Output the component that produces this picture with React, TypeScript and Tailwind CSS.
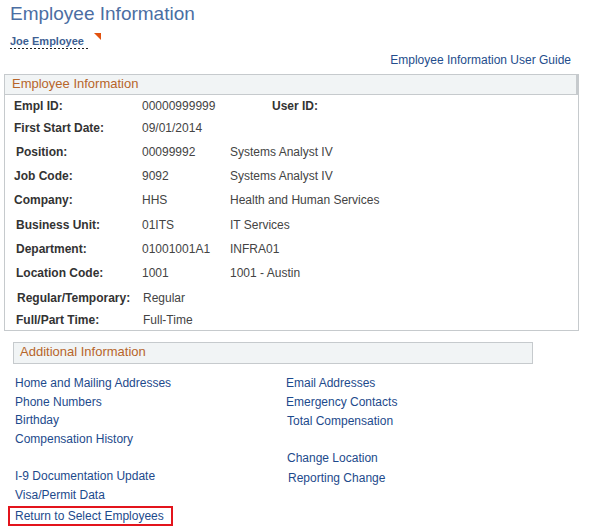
import React from 'react';

interface InfoRow {
  label: string;
  value?: string;
  desc?: string;
  h: string;
  pl: string;
}

const rows: InfoRow[] = [
  { label: 'Empl ID:', value: '00000999999', h: 'h-[21px]', pl: 'pl-[9px]' },
  { label: 'First Start Date:', value: '09/01/2014', h: 'h-[23px]', pl: 'pl-[9px]' },
  { label: 'Position:', value: '00099992', desc: 'Systems Analyst IV', h: 'h-[25px]', pl: 'pl-[11px]' },
  { label: 'Job Code:', value: '9092', desc: 'Systems Analyst IV', h: 'h-[24px]', pl: 'pl-[9px]' },
  { label: 'Company:', value: 'HHS', desc: 'Health and Human Services', h: 'h-[24px]', pl: 'pl-[9px]' },
  { label: 'Business Unit:', value: '01ITS', desc: 'IT Services', h: 'h-[25px]', pl: 'pl-[11px]' },
  { label: 'Department:', value: '01001001A1', desc: 'INFRA01', h: 'h-[24px]', pl: 'pl-[11px]' },
  { label: 'Location Code:', value: '1001', desc: '1001 - Austin', h: 'h-[24px]', pl: 'pl-[11px]' },
  { label: 'Regular/Temporary:', value: 'Regular', h: 'h-[25px]', pl: 'pl-[12px]' },
  { label: 'Full/Part Time:', value: 'Full-Time', h: 'h-[20px]', pl: 'pl-[11px]' },
];

const leftLinks = [
  { text: 'Home and Mailing Addresses', h: 'h-[19px]' },
  { text: 'Phone Numbers', h: 'h-[19px]' },
  { text: 'Birthday', h: 'h-[18px]' },
  { text: 'Compensation History', h: 'h-[20px]' },
  { text: '', h: 'h-[17px]' },
  { text: 'I-9 Documentation Update', h: 'h-[19px]' },
  { text: 'Visa/Permit Data', h: 'h-[20px]' },
];

const rightLinks = [
  { text: 'Email Addresses', h: 'h-[19px]', pl: 'pl-0' },
  { text: 'Emergency Contacts', h: 'h-[19px]', pl: 'pl-0' },
  { text: 'Total Compensation', h: 'h-[19px]', pl: 'pl-[1px]' },
  { text: '', h: 'h-[18px]', pl: 'pl-0' },
  { text: 'Change Location', h: 'h-[19px]', pl: 'pl-[1px]' },
  { text: 'Reporting Change', h: 'h-[21px]', pl: 'pl-[2px]' },
];

export default function App() {
  return (
    <div className="min-h-[527px] bg-white font-['Liberation_Sans',Arial,sans-serif] pl-[4px]">
      <div className="w-[575px]">
        {/* Page title */}
        <h1 className="pl-[6px] pt-[2px] text-[19px] leading-[23px] text-[#4b6ea3]">
          Employee Information
        </h1>

        {/* Employee name with related actions marker */}
        <div className="mt-[10px] flex items-start pl-[6px]">
          <div className="flex flex-col">
            <span className="pr-[5px] text-[11px] font-bold leading-[13px] text-[#3e5f93]">
              Joe Employee
            </span>
            <div className="h-px w-full bg-[linear-gradient(to_right,#222_50%,transparent_50%)] bg-[length:4px_1px] bg-repeat-x" />
          </div>
          <svg className="-mt-[2px] ml-[5px]" width="7" height="7" viewBox="0 0 7 7">
            <polygon points="0,0 7,0 7,7" fill="#e2520f" />
          </svg>
        </div>

        <div className="mt-[4px] pr-[8px] text-right text-[12px] leading-[14px]">
          <a className="text-[#244d8c]">Employee Information User Guide</a>
        </div>

        {/* Employee Information box */}
        <div className="mt-[7px] border border-[#c6cacd]">
          <div className="h-[20px] border-b border-r-2 border-[#c6cacd] bg-[#f1f4f5] pl-[7px] text-[13px] leading-[17px] text-[#b7652a]">
            Employee Information
          </div>
          {rows.map((r) => (
            <div key={r.label} className={`flex items-center text-[12px] ${r.h}`}>
              <div className={`w-[137px] shrink-0 font-bold text-[#333] ${r.pl}`}>{r.label}</div>
              {r.label === 'Empl ID:' ? (
                <>
                  <div className="w-[130px] shrink-0 text-[#444]">{r.value}</div>
                  <div className="font-bold text-[#333]">User ID:</div>
                </>
              ) : (
                <>
                  <div
                    className={`w-[88px] shrink-0 text-[#444] ${
                      r.label === 'Regular/Temporary:' || r.label === 'Full/Part Time:' ? 'pl-[1px]' : ''
                    }`}
                  >
                    {r.value}
                  </div>
                  {r.desc && <div className="text-[#444]">{r.desc}</div>}
                </>
              )}
            </div>
          ))}
        </div>

        {/* Additional Information */}
        <div className="ml-[9px] mt-[11px] h-[22px] w-[520px] border border-[#c6cacd] bg-[#f1f4f5] pl-[6px] text-[13px] leading-[17px] text-[#b7652a]">
          Additional Information
        </div>

        <div className="mt-[9px] flex text-[12px] text-[#1d4a8c]">
          <div className="flex w-[282px] shrink-0 flex-col pl-[11px]">
            {leftLinks.map((l, i) => (
              <div key={i} className={`flex items-center ${l.h}`}>
                {l.text && <a>{l.text}</a>}
              </div>
            ))}
            <div className="mt-[1px] flex">
              <a className="-ml-[7px] flex h-[20px] items-center border-2 border-[#e3141c] pl-[5px] pr-[7px]">
                Return to Select Employees
              </a>
            </div>
          </div>
          <div className="flex flex-col">
            {rightLinks.map((l, i) => (
              <div key={i} className={`flex items-center ${l.h} ${l.pl}`}>
                {l.text && <a>{l.text}</a>}
              </div>
            ))}
          </div>
        </div>
      </div>
    </div>
  );
}
